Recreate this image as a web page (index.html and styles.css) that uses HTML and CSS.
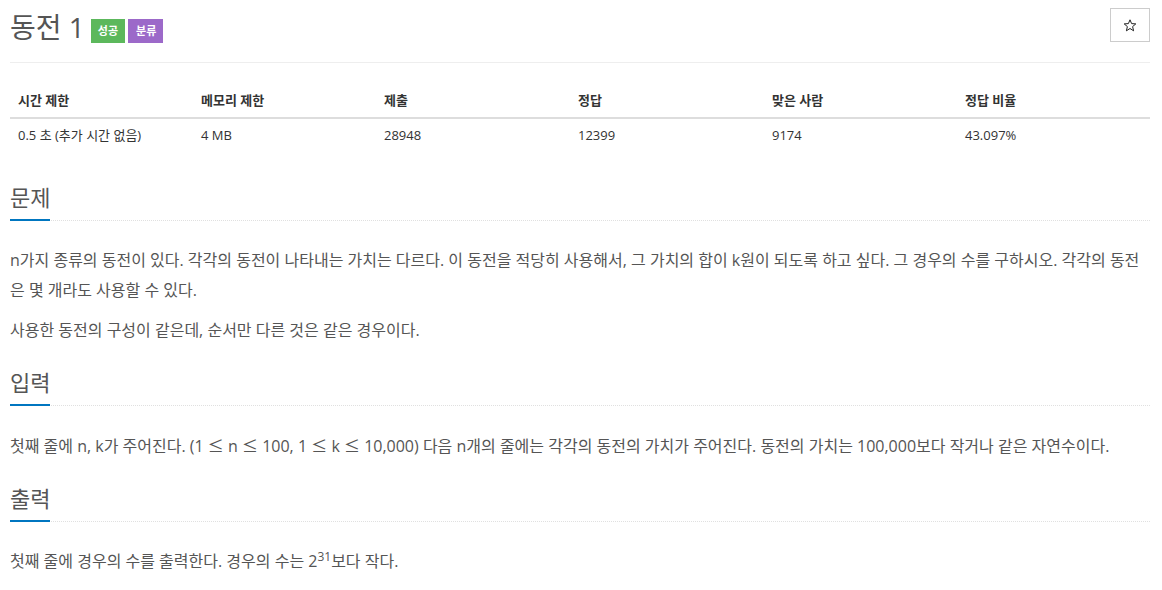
FILE: index.html
```html
<!DOCTYPE html>
<html lang="ko">
<head>
<meta charset="utf-8">
<title>동전 1</title>
<link rel="stylesheet" href="styles.css">
</head>
<body>
<div class="page">
  <div class="page-header">
    <h1 class="title">
      <span class="title-text">동전 1</span>
      <span class="badge badge-green">성공</span>
      <span class="badge badge-purple">분류</span>
    </h1>
    <button class="star-btn" type="button" aria-label="즐겨찾기">
      <svg class="star-icon" width="14" height="13" viewBox="0 0 14 13" aria-hidden="true">
        <polygon points="7,0.8 8.6,4.6 12.8,4.9 9.6,7.6 10.6,11.8 7,9.5 3.4,11.8 4.4,7.6 1.2,4.9 5.4,4.6" fill="none" stroke="#222" stroke-width="1" stroke-linejoin="miter"/>
      </svg>
    </button>
  </div>

  <table class="info">
    <colgroup>
      <col class="c1"><col class="c2"><col class="c3"><col class="c4"><col class="c5"><col class="c6">
    </colgroup>
    <thead>
      <tr><th>시간 제한</th><th>메모리 제한</th><th>제출</th><th>정답</th><th>맞은 사람</th><th>정답 비율</th></tr>
    </thead>
    <tbody>
      <tr><td>0.5 초 (추가 시간 없음)</td><td>4 MB</td><td>28948</td><td>12399</td><td>9174</td><td>43.097%</td></tr>
    </tbody>
  </table>

  <section class="section first">
    <div class="headline"><h2>문제</h2></div>
    <div class="text">
      <p>n가지 종류의 동전이 있다. 각각의 동전이 나타내는 가치는 다르다. 이 동전을 적당히 사용해서, 그 가치의 합이 k원이 되도록 하고 싶다. 그 경우의 수를 구하시오. 각각의 동전은 몇 개라도 사용할 수 있다.</p>
      <p>사용한 동전의 구성이 같은데, 순서만 다른 것은 같은 경우이다.</p>
    </div>
  </section>

  <section class="section">
    <div class="headline"><h2>입력</h2></div>
    <div class="text">
      <p>첫째 줄에 n, k가 주어진다. (1 <span class="sym">≤</span> n <span class="sym">≤</span> 100, 1 <span class="sym">≤</span> k <span class="sym">≤</span> 10,000) 다음 n개의 줄에는 각각의 동전의 가치가 주어진다. 동전의 가치는 100,000보다 작거나 같은 자연수이다.</p>
    </div>
  </section>

  <section class="section">
    <div class="headline"><h2>출력</h2></div>
    <div class="text">
      <p>첫째 줄에 경우의 수를 출력한다. 경우의 수는 2<sup>31</sup>보다 작다.</p>
    </div>
  </section>
</div>
</body>
</html>
```

FILE: styles.css
```css
* { box-sizing: border-box; }

html, body {
  margin: 0;
  padding: 0;
  background: #fff;
}

body {
  font-family: "Open Sans", "Noto Sans CJK KR", sans-serif;
  color: #333;
  font-size: 14px;
}

.page {
  padding: 0 12px 0 10px;
}

.page-header {
  display: flex;
  justify-content: space-between;
  align-items: flex-start;
  border-bottom: 1px solid #eee;
  height: 63px;
}

.title {
  margin: 0;
  padding-top: 9px;
  display: flex;
  align-items: flex-start;
  font-weight: 400;
}

.title-text {
  font-size: 28px;
  line-height: 36px;
  color: #555;
  margin-right: 6px;
}

.badge {
  display: inline-block;
  text-align: center;
  height: 24px;
  line-height: 24px;
  padding: 0 7px;
  margin-top: 10px;
  margin-right: 3px;
  font-size: 11px;
  font-weight: 700;
  color: #fff;
}

.badge-green { background: #5cb85c; }
.badge-purple { background: #9c69c9; padding: 0 7px 0 8px; }

.star-btn {
  margin-top: 8px;
  width: 40px;
  height: 34px;
  border: 1px solid #ccc;
  background: #fff;
  padding: 0;
  display: flex;
  align-items: center;
  justify-content: center;
}

.star-icon { display: block; }

.info {
  width: 100%;
  border-collapse: collapse;
  table-layout: fixed;
  margin-top: 21px;
  font-size: 13px;
}

.c1 { width: 183px; }
.c2 { width: 183px; }
.c3 { width: 194px; }
.c4 { width: 194px; }
.c5 { width: 193px; }

.info th, .info td {
  text-align: left;
  padding: 7px 8px;
  line-height: 19px;
}

.info th {
  font-weight: 700;
  color: #333;
  border-bottom: 2px solid #ddd;
}

.info td {
  color: #333;
}

.section {
  margin-top: 25px;
}

.section.first {
  margin-top: 33px;
}

.headline {
  display: flex;
  align-items: flex-start;
  border-bottom: 1px dotted #e0e0e0;
  margin-bottom: 24px;
  height: 36px;
}

.headline h2 {
  margin: 0 0 -1px;
  font-size: 22px;
  line-height: 24px;
  font-weight: 400;
  color: #555;
  padding: 0 0 10px;
  border-bottom: 2px solid #0076c0;
}

.text {
  font-size: 16px;
  line-height: 30px;
  color: #555;
}

.text p {
  margin: 0 0 10px;
}

.sym {
  font-family: "Noto Sans CJK KR", sans-serif;
}

.text sup {
  font-size: 12px;
  line-height: 0;
  vertical-align: super;
}
```
